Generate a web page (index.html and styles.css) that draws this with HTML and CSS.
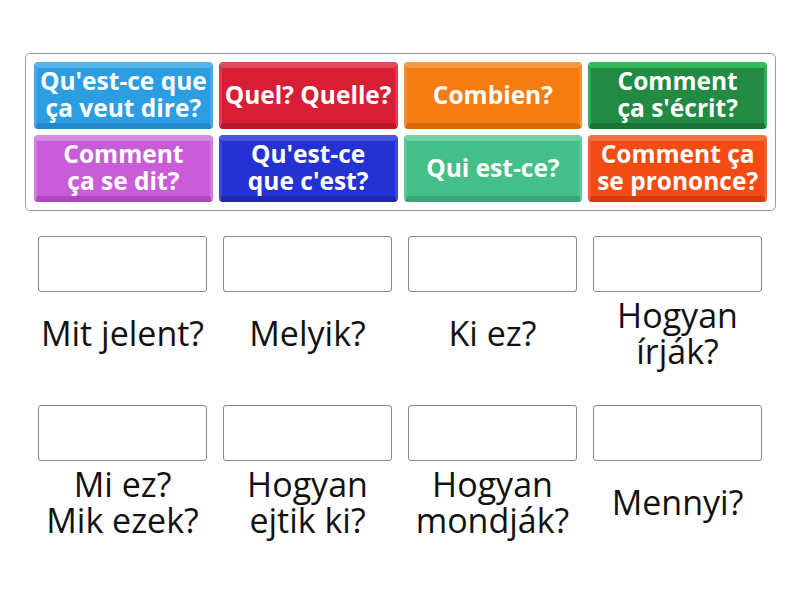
FILE: index.html
```html
<!DOCTYPE html>
<html>
<head>
    <title>Match up</title>
    <link rel="stylesheet" href="styles.css">
</head>
<body>
    <div class="tiles">
        <div class="tile blue">Qu'est-ce que<br>ça veut dire?</div>
        <div class="tile red">Quel? Quelle?</div>
        <div class="tile orange">Combien?</div>
        <div class="tile green">Comment<br>ça s'écrit?</div>
        <div class="tile purple">Comment<br>ça se dit?</div>
        <div class="tile navy">Qu'est-ce<br>que c'est?</div>
        <div class="tile teal">Qui est-ce?</div>
        <div class="tile scarlet">Comment ça<br>se prononce?</div>
    </div>

    <div class="answers">
        <div class="answer">
            <div class="slot"></div>
            <div class="label">Mit jelent?</div>
        </div>
        <div class="answer">
            <div class="slot"></div>
            <div class="label">Melyik?</div>
        </div>
        <div class="answer">
            <div class="slot"></div>
            <div class="label">Ki ez?</div>
        </div>
        <div class="answer">
            <div class="slot"></div>
            <div class="label">Hogyan<br>írják?</div>
        </div>
        <div class="answer">
            <div class="slot"></div>
            <div class="label">Mi ez?<br>Mik ezek?</div>
        </div>
        <div class="answer">
            <div class="slot"></div>
            <div class="label">Hogyan<br>ejtik ki?</div>
        </div>
        <div class="answer">
            <div class="slot"></div>
            <div class="label">Hogyan<br>mondják?</div>
        </div>
        <div class="answer">
            <div class="slot"></div>
            <div class="label">Mennyi?</div>
        </div>
    </div>
</body>
</html>
```

FILE: styles.css
```css
body {
    margin: 0;
    font-family: "Open Sans", "Liberation Sans", sans-serif;
    background: #fff;
}

.tiles {
    box-sizing: border-box;
    width: 751px;
    margin: 53px 0 0 25px;
    padding: 8px;
    border: 1px solid #9a9a9a;
    border-radius: 5px;
    display: grid;
    grid-template-columns: repeat(4, 1fr);
    gap: 6px;
}

.tile {
    box-sizing: border-box;
    height: 67px;
    border-radius: 4px;
    border-style: solid;
    border-width: 6px 3px 6px 3px;
    color: #fff;
    font-weight: bold;
    font-size: 24.5px;
    line-height: 27px;
    text-align: center;
    white-space: nowrap;
    display: flex;
    align-items: center;
    justify-content: center;
    padding: 0 0 3px;
}

.blue    { background: #2d9de2; border-color: #55b3ec #45aae8 #2388c9 #45aae8; }
.red     { background: #d81e35; border-color: #e04a5d #dc3a4e #b8172c #dc3a4e; }
.orange  { background: #f57c12; border-color: #f89844 #f78c30 #d8690b #f78c30; }
.green   { background: #228a42; border-color: #2fbb5c #2cb256 #1c7236 #2cb256; }
.purple  { background: #c95dd8; border-color: #d98ae3 #d37ae0 #b046c0 #d37ae0; }
.navy    { background: #2532d2; border-color: #4a56dc #3c48d8 #1d27b0 #3c48d8; }
.teal    { background: #44bf89; border-color: #70d0a6 #5bc898 #37a574 #5bc898; }
.scarlet { background: #f24b14; border-color: #f6703f #f45f2a #d23d0d #f45f2a; }

.answers {
    width: 724px;
    margin: 25px 0 0 38px;
    display: grid;
    grid-template-columns: repeat(4, 1fr);
    column-gap: 16px;
    row-gap: 29px;
}

.slot {
    box-sizing: border-box;
    height: 56px;
    border: 1px solid #888;
    border-radius: 3px;
    background: #fff;
}

.label {
    height: 84px;
    display: flex;
    align-items: center;
    justify-content: center;
    text-align: center;
    font-size: 34px;
    line-height: 36px;
    color: #111;
    padding-bottom: 3px;
    box-sizing: border-box;
}
```
